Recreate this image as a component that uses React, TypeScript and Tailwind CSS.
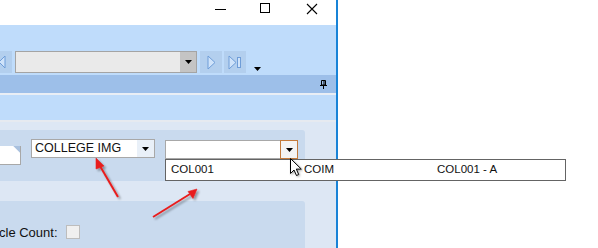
import React from "react"

const DropArrow = ({ className = "" }: { className?: string }) => (
  <svg width="7" height="4" viewBox="0 0 7 4" className={className}>
    <path d="M0 0h7L3.5 4z" fill="#000" />
  </svg>
)

const TitleBar = () => (
  <div className="h-[25px] bg-white flex items-start justify-end shrink-0">
    <svg width="11" height="11" viewBox="0 0 11 11" className="mt-[4px] mr-[34px]">
      <path d="M0 5.5h11" stroke="#000" strokeWidth="1" />
    </svg>
    <svg width="11" height="11" viewBox="0 0 11 11" className="mt-[3px] mr-[35px]">
      <rect x="0.5" y="0.5" width="9" height="9" fill="none" stroke="#000" />
    </svg>
    <svg width="12" height="12" viewBox="0 0 12 12" className="mt-[3px] mr-[18px]">
      <path d="M1 1l10 10M11 1L1 11" stroke="#000" strokeWidth="1.1" />
    </svg>
  </div>
)

const Toolbar = () => (
  <div className="h-[50px] bg-[#BFDCFB] flex items-start pt-[26px] shrink-0">
    <div className="w-[12px] h-[22px] bg-[#B3CFEE] flex items-center overflow-hidden">
      <svg width="8" height="14" viewBox="0 0 8 14" className="-ml-[2px]">
        <path d="M7 1L1 7l6 6z" fill="#CFE3FA" stroke="#6F9DD8" />
      </svg>
    </div>
    <div className="ml-[3px] w-[182px] h-[22px] border border-[#A4A4A4] bg-[#EAEAEA] flex">
      <div className="flex-1" />
      <div className="w-[16px] h-full bg-[#C4C4C4] flex items-center justify-center">
        <DropArrow />
      </div>
    </div>
    <div className="ml-[3px] w-[22px] h-[22px] bg-[#B3CFEE] flex items-center justify-center">
      <svg width="9" height="15" viewBox="0 0 9 15">
        <path d="M1 1l7 6.5L1 14z" fill="#CFE3FA" stroke="#6F9DD8" />
      </svg>
    </div>
    <div className="ml-[2px] w-[22px] h-[22px] bg-[#B3CFEE] flex items-center justify-center">
      <svg width="14" height="15" viewBox="0 0 14 15">
        <path d="M1 1l7 6.5L1 14z" fill="#CFE3FA" stroke="#6F9DD8" />
        <rect x="9.5" y="2.5" width="3" height="10" fill="#CFE3FA" stroke="#6F9DD8" />
      </svg>
    </div>
    <DropArrow className="ml-[8px] mt-[16px]" />
  </div>
)

const Combo = ({
  text,
  width,
  active,
}: {
  text: string
  width: string
  active?: boolean
}) => (
  <div className={`${width} h-[19px] border border-[#A8A8A8] bg-white flex`}>
    <div className="flex-1 pl-[3px] text-[12.5px] leading-[17px] text-[#111]">{text}</div>
    {active ? (
      <div className="w-[18px] -my-px -mr-px border border-[#C47B3C] bg-[#F4F4F4] flex items-center justify-center">
        <DropArrow />
      </div>
    ) : (
      <div className="w-[17px] bg-[#E9F0F8] flex items-center justify-center">
        <DropArrow />
      </div>
    )}
  </div>
)

export default function App() {
  return (
    <div
      className="relative w-[598px] h-[248px] bg-white overflow-hidden flex"
      style={{ fontFamily: '"Liberation Sans", Arial, sans-serif' }}
    >
      <div className="w-[338px] h-full border-r-2 border-[#1883D7] flex flex-col">
        <TitleBar />
        <Toolbar />
        <div className="h-[18px] bg-[#9DBFE9] flex items-center justify-end pr-[9px] shrink-0">
          <svg width="7" height="9" viewBox="0 0 7 9">
            <path d="M1.5 0.5h4v4.5h-4zM0 5.5h7M3.5 5.5V9" stroke="#000" fill="none" strokeWidth="1" />
            <path d="M4 1v4" stroke="#000" strokeWidth="1" />
          </svg>
        </div>
        <div className="h-[2px] bg-[#E9EEF5] shrink-0" />
        <div className="h-[25px] bg-[#BFDCFB] shrink-0" />
        <div className="h-[2px] bg-[#E6EAF0] shrink-0" />
        <div className="flex-1 bg-[#DDE7F4] pt-[8px] pr-[31px] flex flex-col gap-[20px]">
          <div className="h-[51px] bg-[#C9DAEE] rounded-r-[3px] flex items-start pt-[9px]">
            <div className="mt-[7px] w-[21px] h-[19px] bg-white border-r border-b border-[#A8A8A8] relative overflow-hidden">
              <div className="absolute -right-[6px] -top-[6px] w-[11px] h-[11px] bg-[#A9C1DF] rotate-45" />
            </div>
            <div className="ml-[10px]">
              <Combo text="COLLEGE IMG" width="w-[124px]" />
            </div>
            <div className="ml-[10px] mt-px">
              <Combo text="" width="w-[133px]" active />
            </div>
          </div>
          <div className="flex-1 bg-[#C9DAEE] rounded-tr-[3px] flex items-start pt-[24px]">
            <span className="text-[13px] leading-[15px] text-[#111] -ml-[1px]">cle Count:</span>
            <div className="ml-[8px] w-[14px] h-[14px] bg-[#F0F0F0] border border-[#BDBDBD]" />
          </div>
        </div>
      </div>

      {/* open dropdown list */}
      <div className="absolute left-[165px] top-[159px] w-[401px] h-[22px] bg-white border border-[#646464] flex items-center text-[11.5px] text-[#111]">
        <span className="w-[133px] pl-[5px]">COL001</span>
        <span className="w-[133px] pl-[5px]">COIM</span>
        <span className="pl-[5px]">COL001 - A</span>
      </div>

      {/* annotation arrows */}
      <svg className="absolute left-0 top-0" width="598" height="248" viewBox="0 0 598 248">
        <defs>
          <filter id="sh" x="-50%" y="-50%" width="200%" height="200%">
            <feDropShadow dx="2" dy="2" stdDeviation="1.2" floodColor="#000" floodOpacity="0.35" />
          </filter>
        </defs>
        <g filter="url(#sh)" fill="#E81F1F" stroke="#E81F1F">
          <path d="M118 197L100 166" strokeWidth="2" />
          <path d="M96 158l8 8-8 3z" strokeWidth="0.6" />
          <path d="M153 217L190 194" strokeWidth="2" />
          <path d="M197 189l-4 9.5-5-7z" strokeWidth="0.6" />
        </g>
      </svg>

      {/* mouse cursor */}
      <svg className="absolute left-[289px] top-[157px]" width="14" height="22" viewBox="0 0 14 22">
        <defs>
          <filter id="cs" x="-50%" y="-50%" width="200%" height="200%">
            <feDropShadow dx="1" dy="1" stdDeviation="0.8" floodColor="#000" floodOpacity="0.35" />
          </filter>
        </defs>
        <path
          d="M1.5 1.5v15l3.5-3.5 2.5 5.5 2.2-1-2.4-5.4h5z"
          fill="#fff"
          stroke="#000"
          strokeWidth="1"
          strokeLinejoin="round"
          filter="url(#cs)"
        />
      </svg>
    </div>
  )
}
